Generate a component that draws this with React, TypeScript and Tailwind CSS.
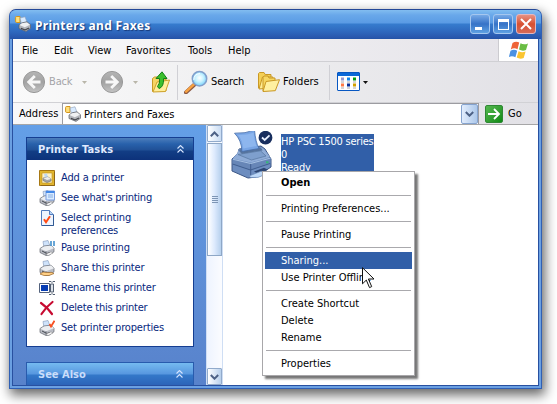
import type { ReactNode } from "react";

function MiniPrinter({ size = 16, badge }: { size?: number; badge?: ReactNode }) {
  return (
    <svg width={size} height={size} viewBox="0 0 16 16" className="shrink-0">
      <path d="M4 1.5 9 .5l2 5.5-6 1.5z" fill="#cfe3fb" stroke="#8093b5" strokeWidth=".6" />
      <path d="M1 8.5 5 6l7-.8 3 3v3.6l-5 3.4-3 .3-6-3z" fill="#b9bcc4" stroke="#62656f" strokeWidth=".7" />
      <path d="m1.4 8.8 5.6 2.4 8-3-3-2.6-7 .8z" fill="#eceef1" />
      <path d="M7 11.2v4" stroke="#6c7078" strokeWidth=".7" />
      <path d="m3 11 5 2.5 3-1" stroke="#444850" fill="none" />
      <path d="m7 14 5-2 2 1-5 2.5z" fill="#fff" stroke="#777" strokeWidth=".4" />
      {badge}
    </svg>
  );
}

function PrintersFolder() {
  return (
    <svg width="16" height="16" viewBox="0 0 16 16" className="shrink-0">
      <path d="M.6 1.5q0-1 1-1H5v6H1.5Q.6 6.5.6 5z" fill="#ffe07c" stroke="#d3951d" />
      <path d="m5 2 5-1.2 1.8 5L6.5 8z" fill="#d9ebff" stroke="#8d9db7" strokeWidth=".6" />
      <path d="m4 9 3-2.2 5-1 3.6 3v3.4L11 15.4 4 12.5z" fill="#b3b5bb" stroke="#5d5f66" strokeWidth=".7" />
      <path d="m4.5 9 5.3 2.2 5.2-2.4-3-2.4-5 .8z" fill="#f0f1f3" />
      <path d="m6 12.2 4 1.8 4-2" stroke="#3e4046" strokeWidth="1.1" fill="none" />
    </svg>
  );
}

function RoundArrow({ forward = false }: { forward?: boolean }) {
  return (
    <svg width="24" height="24" viewBox="0 0 24 24" className="shrink-0">
      <defs>
        <linearGradient id="disc" x2="0" y2="1">
          <stop stopColor="#b5b5b5" /><stop offset=".5" stopColor="#a2a2a2" /><stop offset="1" stopColor="#c3c3c3" />
        </linearGradient>
      </defs>
      <circle cx="12" cy="12" r="10.6" fill="url(#disc)" stroke="#999" />
      <g transform={forward ? "translate(24 0) scale(-1 1)" : undefined}>
        <path d="M18.5 12H7m5.8-6L6.7 12l6.1 6" fill="none" stroke="#f7f7f7" strokeWidth="2.8" />
      </g>
    </svg>
  );
}

function Caret({ color }: { color: string }) {
  return <svg width="5" height="3" viewBox="0 0 5 3" className="shrink-0"><path d="M0 0h5L2.5 3z" fill={color} /></svg>;
}

function UpFolder() {
  return (
    <svg width="20" height="24" viewBox="0 0 20 24" className="shrink-0">
      <path d="M1.5 21.5v-13l2-1.5h4l1 2H15v12z" fill="#f6d564" stroke="#c79a25" />
      <path d="m2 22 4-10 12.5-2-4 11.5z" fill="#ffee9b" stroke="#cfa32e" />
      <path d="M8 18.5q5-1.5 4.5-10H16L11 1.8 5 8.5h3.5q.8 5-2 8z" fill="#3bc02c" stroke="#14801a" />
    </svg>
  );
}

function SearchIcon() {
  return (
    <svg width="24" height="24" viewBox="0 0 24 24" className="shrink-0">
      <defs><radialGradient id="glass" cx=".5" cy=".45"><stop stopColor="#fff" /><stop offset=".55" stopColor="#c8f2ff" /><stop offset="1" stopColor="#83d5fb" /></radialGradient></defs>
      <path d="m10 15-8 7.4" stroke="#8b5a45" strokeWidth="4" strokeLinecap="round" />
      <path d="m9.7 14.6-7.6 7.1" stroke="#f8a141" strokeWidth="2.5" strokeLinecap="round" />
      <circle cx="15.5" cy="8.7" r="7.2" fill="url(#glass)" stroke="#829fcb" strokeWidth="1.5" />
      <path d="M9.8 10q0-6 6.2-6.4" fill="none" stroke="#fff" />
    </svg>
  );
}

function FoldersIcon() {
  return (
    <svg width="24" height="22" viewBox="0 0 24 22" className="shrink-0">
      <g stroke="#c99825">
        <path d="M1.5 17V2.5l1-1H7l1.2 2H14V16z" fill="#f4cf56" />
        <path d="M2 18 5.5 6H16l-3 11z" fill="#ffed95" />
        <path d="M6 20V6.5L7 5h4l1 2h6v12z" fill="#f7d762" />
        <path d="m6 20.5 3-10 13.5-1.8-4.2 11z" fill="#fff0a0" />
      </g>
    </svg>
  );
}

function ViewsIcon() {
  return (
    <svg width="24" height="20" viewBox="0 0 24 20" className="shrink-0">
      <rect x=".5" y=".5" width="22" height="18" rx=".5" fill="#fff" stroke="#0757c2" />
      <path d="M1 1h21v3H1z" fill="#0b68d7" />
      <path d="M4 5.5h3v3H4z" fill="#9595ce" /><path d="M10 5.5h3v3h-3z" fill="#1184e8" /><path d="M16 5.5h3v3h-3z" fill="#009c14" />
      <path d="M4 11.5h3v3H4z" fill="#ff7a45" /><path d="M10 11.5h3v3h-3z" fill="#0b349d" /><path d="M16 11.5h3v3h-3z" fill="#d0a000" />
      <path d="M4 10h3m3 0h3m3 0h3M4 16h3m3 0h3m3 0h3" stroke="#aaa" />
    </svg>
  );
}

function WindowsFlag() {
  return (
    <svg width="20" height="19" viewBox="0 0 20 19">
      <path d="M3.5 2Q7-.2 10.2 1.6L8.5 8.3Q5.2 6.4 1.8 8.4z" fill="#ef6437" />
      <path d="M11.5 2.2q3.5 2 7.5.2l-2 6.6q-3.4 1.6-7-.4z" fill="#69bd43" />
      <path d="M1.5 9.7q3.5-2 6.7 0l-1.8 6.5Q3 14.3-.1 16z" fill="#4c91e2" />
      <path d="M9.6 10.2q3.4 1.8 7 .2l-1.9 6.5q-3.4 1.6-7-.3z" fill="#fbc531" />
    </svg>
  );
}

function BigPrinter() {
  return (
    <svg width="44" height="48" viewBox="6 6 44 48" className="shrink-0">
      <path d="m7 34 6-6 1-4 22-3 4 3 6 10v8L31 52l-8 1L7 46z" fill="#6d8dbf" stroke="#3c5786" />
      <path d="M7.5 33.5 12.5 28l1.3-3.5L35 22l4 2 6 8-19 5.5z" fill="#8facd7" />
      <path d="M14 26q0-2 2-2l17-2q3 0 4 2l.5 1.5L17 29z" fill="#56749f" />
      <path d="M9.5 8.2q11 .5 20-3.2Q30.5 17 34 23.5L17 26.5Q16.5 15 9.5 8.2z" fill="#78a5e5" stroke="#486fa9" strokeWidth=".8" />
      <path d="M13 10q9 .2 15.6-2.3Q29.3 16 31.5 21l-13.2 2.5Q17.5 15 13 10z" fill="#8db6ee" />
      <path d="m13 29.5 22.5-3.7L41 31l-14.5 4z" fill="#7e9fcd" stroke="#56759f" strokeWidth=".7" />
      <path d="m7.5 34 18 4.5L45.5 33v5L26 45.5 7.5 39z" fill="#6786b7" />
      <path d="M25.7 38.5V51M7.5 39l18 6L45 38.5" fill="none" stroke="#405e8f" />
      <path d="m8 34.3 17.7 4.2 19.8-5.4" fill="none" stroke="#a6c0e2" />
      <path d="m29 46.5 10-3.7 4 2-10 4z" fill="#2d4673" />
      <path d="m24 51 12-4.7 9 1.2-12 4.9-7 .1z" fill="#bdd8f8" stroke="#6989b8" strokeWidth=".7" />
      <path d="M41 37.2h2.5" stroke="#35b778" strokeWidth="2" />
      <circle cx="40.5" cy="12.7" r="6.9" fill="#182e5e" />
      <path d="m37 12.5 2.7 2.5 4.8-4.7" fill="none" stroke="#eaf1ff" strokeWidth="1.8" />
    </svg>
  );
}

function Chevron({ down = false, color = "#4d6185" }: { down?: boolean; color?: string }) {
  return (
    <svg width="9" height="6" viewBox="0 0 9 6"><path d={down ? "m.8 1 3.7 3.7L8.2 1" : "M.8 5.2 4.5 1.5l3.7 3.7"} fill="none" stroke={color} strokeWidth="2" /></svg>
  );
}

function DoubleChevron() {
  return <svg width="7" height="8" viewBox="0 0 7 8"><path d="m.5 3.5 3-3 3 3m-6 4 3-3 3 3" fill="none" stroke="#d5e4ff" strokeWidth="1.1" /></svg>;
}

const addIcon = (
  <svg width="16" height="16" viewBox="0 0 16 16">
    <path d="M.5.5h15v15H.5z" fill="#e1b52e" stroke="#a77814" /><path d="M3 3h10v10H3z" fill="#fff4c7" stroke="#bb8e25" strokeWidth=".6" />
    <path d="m5 4 3-.5 1 4-3 .7z" fill="#bfd8f4" /><path d="m4 8 5-1 3 2v2l-4 1.5-4-2z" fill="#a2a5ab" stroke="#66696e" strokeWidth=".6" /><path d="m4 8 4 2 4-1-3-2z" fill="#eee" /><path d="M2 15.5h13.5V2" fill="none" stroke="#8f6617" />
  </svg>
);
const seeIcon = <MiniPrinter badge={<><path d="M7 1h8.5v9H7z" fill="#d9ebff" stroke="#7b9ddd" /><path d="M7 1h8.5v2H7z" fill="#4288e8" /><path d="M9 5h5m-5 2h5" stroke="#87afe5" /></>} />;
const selectIcon = <svg width="16" height="16" viewBox="0 0 16 16"><path d="M2.5.5h8l4 4v11h-12z" fill="#eef5ff" stroke="#527cbd" /><path d="M10.5.5v4h4" fill="#b9d4f4" stroke="#527cbd" /><path d="M3 15.5h11.5V5" fill="none" stroke="#315a94" /><path d="m5 9.3 2 3 4-6" fill="none" stroke="#ff4a13" strokeWidth="2" /></svg>;
const pauseIcon = <MiniPrinter badge={<path d="M12 1v5m3-5v5" stroke="#4391ce" strokeWidth="1.6" />} />;
const shareIcon = <MiniPrinter badge={<path d="M1 14q3-3 7-1.5h5l2 1-5 2H5z" fill="#ffcf83" stroke="#9b672b" strokeWidth=".7" />} />;
const renameIcon = <svg width="16" height="16" viewBox="0 0 16 16"><path d="M.5 3.5h10v9H.5z" fill="#fff" stroke="#53627d" /><path d="M2 5h7v6H2z" fill="#073db4" /><path d="M10 1.5h2l1 1 1-1h2M10 14.5h2l1-1 1 1h2M11.5 4h3v8h-3z" fill="#dce2ea" stroke="#525e70" strokeWidth="1" /></svg>;
const deleteIcon = <svg width="16" height="16" viewBox="0 0 16 16"><path d="M2 3q6 4 11 11M13.5 2Q7 7 2.5 14" fill="none" stroke="#c70b31" strokeWidth="2.2" strokeLinecap="round" /></svg>;
const setIcon = <MiniPrinter badge={<path d="m10.5 4 1.5 2.5L15.5.8" fill="none" stroke="#f85021" strokeWidth="1.8" />} />;

const tasks: { icon: ReactNode; text: ReactNode; tall?: boolean; track: string }[] = [
  { icon: addIcon, text: "Add a printer", track: "tracking-[-0.15px]" },
  { icon: seeIcon, text: "See what's printing", track: "tracking-[-0.24px]" },
  { icon: selectIcon, text: <>Select printing<br />preferences</>, tall: true, track: "tracking-[-0.14px]" },
  { icon: pauseIcon, text: "Pause printing", track: "tracking-[-0.14px]" },
  { icon: shareIcon, text: "Share this printer", track: "tracking-[-0.16px]" },
  { icon: renameIcon, text: "Rename this printer", track: "tracking-[-0.2px]" },
  { icon: deleteIcon, text: "Delete this printer", track: "tracking-[-0.2px]" },
  { icon: setIcon, text: "Set printer properties", track: "tracking-[-0.16px]" },
];

function MenuItem({ children, selected = false, bold = false }: { children: ReactNode; selected?: boolean; bold?: boolean }) {
  return <div className={`h-[17px] whitespace-nowrap pl-4 leading-[17px] ${selected ? "bg-[#315fa8] text-white" : ""} ${bold ? "font-bold" : ""}`}>{children}</div>;
}
function MenuRule() {
  return <div className="flex h-[9px] items-center px-px"><div className="h-px w-full bg-[#aaa9ad]" /></div>;
}

function CaptionButton({ close = false, children }: { close?: boolean; children: ReactNode }) {
  return <div className={`flex h-5 w-5 items-center justify-center rounded-[3px] border ${close ? "border-[#e5b6bd] bg-linear-to-b from-[#e69182] via-[#d75031] to-[#d56a57]" : "border-[#a5c7ef] bg-linear-to-b from-[#76a9e6] via-[#3773c7] to-[#5fa1e2]"}`}>{children}</div>;
}

export default function App() {
  return (
    <main className="h-[404px] w-[557px] overflow-hidden bg-white pl-[9px] pt-[9px] font-['DejaVu_Sans_Condensed','DejaVu_Sans',sans-serif] text-[11px] text-black [font-stretch:condensed]">
      <section className="flex h-[380px] w-[533px] flex-col overflow-hidden rounded-t-[7px] border border-[#3060b4] border-t-[#244898] bg-[#6196df] shadow-[2px_5px_12px_1px_rgba(0,0,0,.6)]">
        <header className="flex h-[29px] shrink-0 items-center border-b border-[#2454a8] bg-[linear-gradient(#82bdf0_0px,#69a8ea_5px,#5a9be4_13px,#367cce_14px,#2e67bd_22px,#2855ab_28px)] pl-[5px] pr-[5px]">
          <PrintersFolder />
          <h1 className="ml-1 whitespace-nowrap pt-[3px] font-['Noto_Sans',sans-serif] text-[12px] leading-5 font-bold tracking-[0.28px] text-white [text-shadow:1px_1px_1px_#173878]">Printers and Faxes</h1>
          <div className="ml-auto flex gap-[3px]">
            <CaptionButton><span className="mt-2 mr-1 h-[3px] w-[7px] bg-white" /></CaptionButton>
            <CaptionButton><span className="h-[11px] w-[11px] border border-t-[3px] border-white" /></CaptionButton>
            <CaptionButton close><svg width="12" height="12" viewBox="0 0 12 12"><path d="m1 1 10 10M11 1 1 11" stroke="#fff" strokeWidth="2" /></svg></CaptionButton>
          </div>
        </header>
        <div className="flex min-h-0 flex-1 flex-col border-x-2 border-b-2 border-[#6ba0e2]">
          <div className="flex min-h-0 flex-1 flex-col border-x border-b border-[#2850a0] bg-white">
            <nav className="flex h-[23px] shrink-0 border-b border-[#d0d0d4] bg-linear-to-r from-[#fafafa] to-[#e4e2e8] leading-[23px]">
              <span className="ml-[9px] w-8 tracking-[-.1px]">File</span><span className="w-[34px]">Edit</span><span className="w-[38px]">View</span><span className="w-[62px]">Favorites</span><span className="w-10">Tools</span><span>Help</span>
              <div className="ml-auto flex w-10 justify-center border-l border-[#cccbd0] bg-white pt-[2px]"><WindowsFlag /></div>
            </nav>
            <div className="flex h-[41px] shrink-0 items-center border-b border-[#d1d1d5] bg-linear-to-r from-[#fafafa] via-[#ededef] to-[#e2e1e6] pl-[9px]">
              <RoundArrow /><span className="ml-[3px] w-[33px] tracking-[-.15px] text-[#a4a4a8]">Back</span><Caret color="#b9b6a9" />
              <div className="ml-[13px]"><RoundArrow forward /></div><div className="ml-[9px]"><Caret color="#b9b6a9" /></div>
              <div className="ml-[13px]"><UpFolder /></div><div className="mx-[6px] h-[35px] w-px bg-[#d0d0d5]" />
              <SearchIcon /><span className="ml-[3px] w-[46px] tracking-[-.15px]">Search</span><FoldersIcon /><span className="ml-[2px] w-[46px]">Folders</span>
              <div className="h-[35px] w-px bg-[#d0d0d5]" /><div className="ml-[7px]"><ViewsIcon /></div><div className="ml-[2px]"><Caret color="#111" /></div>
            </div>
            <div className="flex h-[21px] shrink-0 items-center bg-linear-to-r from-[#f8f8f9] to-[#e2e1e6] pl-[6px]">
              <span className="w-[43px] pt-[2px]">Address</span>
              <div className="flex h-[21px] w-[417px] items-center border border-b-0 border-[#9c9ca1] bg-white pl-[2px]">
                <PrintersFolder /><span className="ml-[3px] pt-[2px]">Printers and Faxes</span>
                <div className="ml-auto flex h-5 w-[17px] items-center justify-center rounded-[2px] border border-[#86a4d0] bg-linear-to-r from-[#e2edfd] to-[#adc8ea]"><Chevron down /></div>
              </div>
              <div className="ml-[6px] flex h-[18px] w-[18px] items-center justify-center rounded-[2px] border border-[#2f8834] bg-linear-to-br from-[#54b84f] to-[#068b12]"><svg width="14" height="14" viewBox="0 0 14 14"><path d="M1 7h11M7 2l5 5-5 5" fill="none" stroke="#fff" strokeWidth="1.8" /></svg></div>
              <span className="ml-[5px] pt-px">Go</span>
            </div>
            <div className="flex min-h-0 flex-1 border-t border-[#a6a6a7]">
              <aside className="flex w-[193px] shrink-0 flex-col overflow-hidden bg-linear-to-b from-[#649fe7] to-[#5882cb] pt-3 pl-[13px]">
                <section className="h-[210px] w-[168px] shrink-0 border border-[#153e91] bg-white">
                  <h2 className="flex h-[22px] items-center justify-between bg-[linear-gradient(#4d7ebc_0px,#2861ab_6px,#205096_12px,#123e85_13px,#0c3079_23px)] pl-[11px] pr-[9px] font-bold tracking-[.2px] text-[#e0ebff]"><span className="pt-[3px]">Printer Tasks</span><DoubleChevron /></h2>
                  <ul className="pt-[7px] text-[#06267d]">
                    {tasks.map((task, index) => <li key={index} className={`flex pl-3 ${task.tall ? "h-[30px]" : "h-5"}`}><span className="mt-[3px] mr-[6px] h-4 w-4 shrink-0">{task.icon}</span><span className={`mt-[4px] whitespace-nowrap leading-[13px] ${task.track}`}>{task.text}</span></li>)}
                  </ul>
                </section>
                <h2 className="mt-[15px] flex h-[23px] w-[168px] shrink-0 items-center justify-between border border-b-0 border-[#285bad] bg-[linear-gradient(#75baf0_0px,#5797df_11px,#3378c9_12px,#2b62b7_23px)] pl-[11px] pr-[10px] font-bold text-[#c9ddfa]"><span className="pt-[3px]">See Also</span><DoubleChevron /></h2>
              </aside>
              <div className="flex w-[17px] shrink-0 flex-col border-x border-[#cfdef4] bg-linear-to-r from-[#eef4ff] to-[#fbfcff]">
                <div className="flex h-[17px] items-center justify-center rounded-[1px] border border-[#91aacb] bg-linear-to-r from-white to-[#c9dcf3]"><Chevron /></div>
                <div className="mt-px flex h-[113px] flex-col items-center justify-center gap-px border border-[#8ea7c6] bg-linear-to-r from-white via-[#ddeafd] to-[#b6d0ed]">
                  {[0, 1, 2, 3].map(n => <span key={n} className="h-px w-[6px] bg-[#7d95b4]" />)}
                </div>
                <div className="mt-auto flex h-[17px] items-center justify-center rounded-[1px] border border-[#91aacb] bg-linear-to-r from-white to-[#b8d0ec]"><Chevron down /></div>
              </div>
              <div className="relative flex min-w-0 flex-1 items-start bg-white pt-[6px] pl-2">
                <BigPrinter />
                <div className="mt-[3px] ml-[6px] h-[39px] w-[93px] shrink-0 whitespace-nowrap bg-[#315fa8] leading-[13px] tracking-[-.22px] text-white"><div className="pt-px">HP PSC 1500 series</div><div>0</div><div>Ready</div></div>
                <div className="absolute top-[46px] left-[39px] h-[205px] w-[153px] border border-[#a8a7aa] bg-white p-[2px] shadow-[3px_3px_2px_#777]">
                  <MenuItem bold>Open</MenuItem><MenuRule /><MenuItem>Printing Preferences...</MenuItem><MenuRule /><MenuItem>Pause Printing</MenuItem><MenuRule />
                  <MenuItem selected>Sharing...</MenuItem><MenuItem>Use Printer Offline</MenuItem><MenuRule /><MenuItem>Create Shortcut</MenuItem><MenuItem>Delete</MenuItem><MenuItem>Rename</MenuItem><MenuRule /><MenuItem>Properties</MenuItem>
                </div>
                <svg className="absolute top-[142px] left-[139px]" width="13" height="22" viewBox="0 0 13 22"><path d="M.5.7v16.1l3.8-3.7 3.2 7.5 2.2-1L6.4 12H12z" fill="#fff" stroke="#111" /></svg>
              </div>
            </div>
          </div>
        </div>
      </section>
    </main>
  );
}
